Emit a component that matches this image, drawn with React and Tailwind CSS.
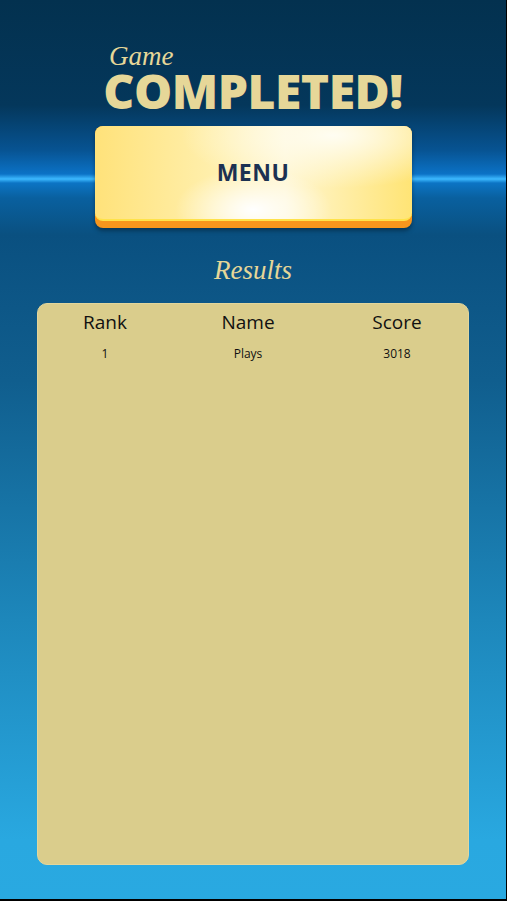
import React from "react"

const results = [{ rank: 1, name: "Plays", score: 3018 }]

const App = () => {
  return (
    <div className="w-[507px] h-[901px] overflow-hidden border-r border-b-2 border-black bg-[linear-gradient(180deg,#03314f_0px,#04375b_105px,#075392_150px,#0b72c6_174px,#3cb9ff_179px,#0c74c4_183px,#09609f_198px,#0a5080_235px,#105e8e_380px,#1d87bb_620px,#29a8e0_840px,#29a9e1_100%)] font-['Open_Sans',sans-serif]">
      <div className="w-full flex flex-col items-center pt-[43px]">
        <div className="w-[300px] text-left pl-[6px] text-[#e6d798] italic text-[27px] leading-[26px] font-['Liberation_Serif',serif]">
          Game
        </div>
        <h1 className="text-[#e6d798] font-extrabold text-[48px] leading-[44px] tracking-[-0.5px]">
          COMPLETED!
        </h1>
        <button className="mt-[13px] w-[317px] h-[102px] rounded-[8px] pb-[7px] bg-[#f7961d] shadow-[0_3px_4px_rgba(0,0,0,0.35)]">
          <div className="w-full h-full rounded-[8px] flex items-center justify-center bg-[radial-gradient(ellipse_at_50%_90%,#ffffff_0%,rgba(255,255,255,0)_35%),radial-gradient(ellipse_at_75%_10%,#fffdf2_0%,rgba(255,255,255,0)_45%),linear-gradient(90deg,#ffe27a_0%,#fff0b0_40%,#fff6d0_60%,#ffe475_100%)] border-b-2 border-[#ffe24a]">
            <span className="text-[#1c3152] font-bold text-[23px] tracking-[0.5px]">MENU</span>
          </div>
        </button>
        <h2 className="mt-[26px] text-[#e6d798] italic text-[27px] leading-[32px] font-['Liberation_Serif',serif]">
          Results
        </h2>
        <div className="mt-[17px] w-[432px] h-[562px] rounded-[10px] bg-[#dacd8c] border border-[#e2d69c] text-[#111]">
          <div className="grid grid-cols-[134px_152px_146px] text-center pt-[4px]">
            <div className="text-[19px] leading-[28px]">Rank</div>
            <div className="text-[19px] leading-[28px]">Name</div>
            <div className="text-[19px] leading-[28px]">Score</div>
            {results.map((item) => (
              <React.Fragment key={item.rank}>
                <div className="text-[12px] leading-[18px] mt-[9px]">{item.rank}</div>
                <div className="text-[12px] leading-[18px] mt-[9px]">{item.name}</div>
                <div className="text-[12px] leading-[18px] mt-[9px]">{item.score}</div>
              </React.Fragment>
            ))}
          </div>
        </div>
      </div>
    </div>
  )
}

export default App
